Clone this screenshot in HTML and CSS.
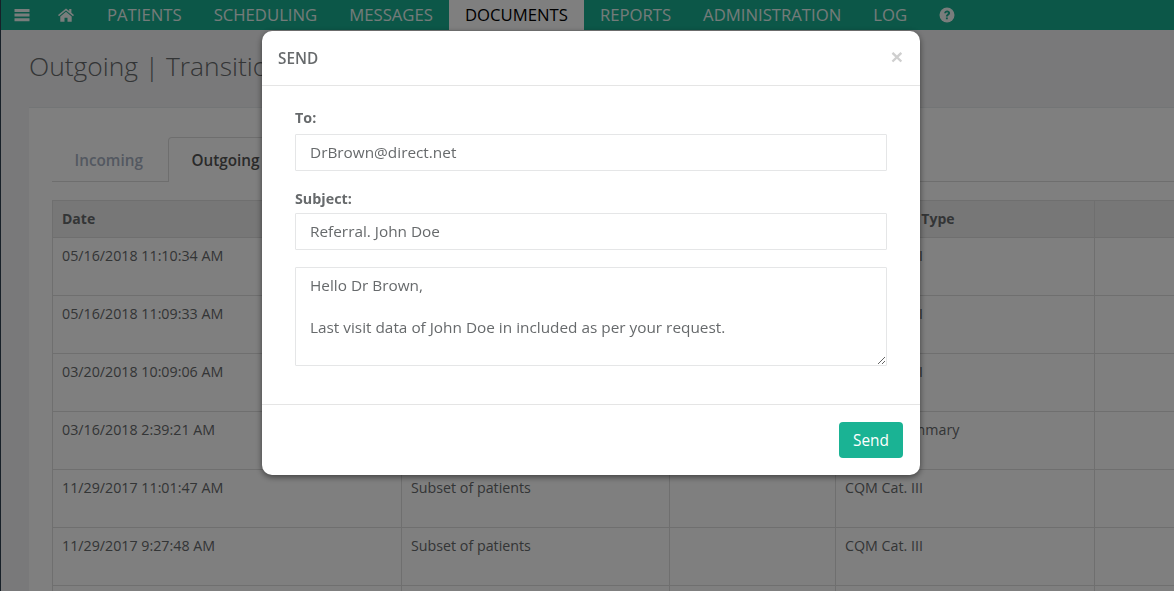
FILE: index.html
```html
<!DOCTYPE html>
<html lang="en">
<head>
<meta charset="utf-8">
<title>Outgoing | Transitions</title>
<link rel="stylesheet" href="styles.css">
</head>
<body>
<div class="page">
  <nav class="topnav">
    <span class="nav-icon nav-burger"><svg width="16" height="14" viewBox="0 0 16 14"><path d="M0.5 1h15v3h-15zM0.5 5.6h15v3h-15zM0.5 10.2h15v3h-15z" fill="currentColor"/></svg></span>
    <span class="nav-icon nav-home"><svg width="16" height="14" viewBox="0 0 16 14"><path d="M8 0.4 0 7l1 1.2L8 2.5l7 5.7L16 7l-2.6-2.2V1h-2.2v2zM2.3 8.4V13.8h4.2V9.8h3v4h4.2V8.4L8 3.8z" fill="currentColor"/></svg></span>
    <a class="nav-link">PATIENTS</a>
    <a class="nav-link">SCHEDULING</a>
    <a class="nav-link">MESSAGES</a>
    <a class="nav-link active">DOCUMENTS</a>
    <a class="nav-link">REPORTS</a>
    <a class="nav-link">ADMINISTRATION</a>
    <a class="nav-link">LOG</a>
    <span class="nav-icon nav-help"><svg width="16" height="16" viewBox="0 0 16 16"><circle cx="8" cy="8" r="7.5" fill="currentColor"/><path d="M5.2 6.2C5.4 4.6 6.6 3.6 8.2 3.6c1.6 0 2.9 1 2.9 2.4 0 1.3-.8 1.9-1.6 2.4-.5.3-.7.6-.7 1.1H6.9c0-1.1.4-1.8 1.2-2.3.6-.4.9-.6.9-1.1 0-.5-.4-.8-.9-.8-.6 0-1 .4-1.1 1zM6.9 10.4h1.9v1.9H6.9z" fill="#18ae90"/></svg></span>
  </nav>
  <main class="content">
    <h1 class="page-title">Outgoing | Transitions of Care</h1>
    <section class="card">
      <div class="tabs">
        <a class="tab">Incoming</a>
        <a class="tab tab-active">Outgoing</a>
      </div>
      <table class="grid">
        <colgroup><col class="c1"><col class="c2"><col class="c3"><col class="c4"><col class="c5"></colgroup>
        <thead><tr><th>Date</th><th>Recipients</th><th>Status</th><th>Document Type</th><th></th></tr></thead>
        <tbody>
          <tr><td>05/16/2018 11:10:34 AM</td><td>Subset of patients</td><td></td><td>CQM Cat. III</td><td></td></tr>
          <tr><td>05/16/2018 11:09:33 AM</td><td>Subset of patients</td><td></td><td>CQM Cat. III</td><td></td></tr>
          <tr><td>03/20/2018 10:09:06 AM</td><td>Subset of patients</td><td></td><td>CQM Cat. III</td><td></td></tr>
          <tr><td>03/16/2018 2:39:21 AM</td><td>John Doe</td><td></td><td>Clinical Summary</td><td></td></tr>
          <tr><td>11/29/2017 11:01:47 AM</td><td>Subset of patients</td><td></td><td>CQM Cat. III</td><td></td></tr>
          <tr><td>11/29/2017 9:27:48 AM</td><td>Subset of patients</td><td></td><td>CQM Cat. III</td><td></td></tr>
          <tr><td></td><td></td><td></td><td></td><td></td></tr>
        </tbody>
      </table>
    </section>
  </main>
</div>
<div class="backdrop"></div>
<div class="modal">
  <header class="modal-head">
    <h4 class="modal-title">SEND</h4>
    <span class="modal-close">×</span>
  </header>
  <div class="modal-body">
    <label class="field-label">To:</label>
    <input class="field" type="text" value="DrBrown@direct.net">
    <label class="field-label label-second">Subject:</label>
    <input class="field" type="text" value="Referral. John Doe">
    <textarea class="field field-area">Hello Dr Brown,

Last visit data of John Doe in included as per your request.</textarea>
  </div>
  <footer class="modal-foot">
    <button class="btn-send" type="button">Send</button>
  </footer>
</div>
</body>
</html>
```
FILE: styles.css
```css
* { box-sizing: border-box; }
html, body { margin: 0; height: 591px; overflow: hidden; }
body {
  font-family: "Open Sans", "Liberation Sans", sans-serif;
  font-size: 14.25px;
  color: #676a6c;
  background: #2f4050;
}
.page { margin-left: 1px; height: 591px; background: #f3f3f4; overflow: hidden; }
.topnav {
  display: flex;
  align-items: stretch;
  height: 30px;
  background: #18ae90;
  color: #fff;
  font-size: 16.7px;
  line-height: 30px;
}
.nav-icon { display: flex; align-items: center; color: #fff; opacity: .95; }
.nav-burger { margin-left: 13px; width: 44px; }
.nav-home { width: 33px; }
.nav-help { margin-left: 16px; }
.nav-link { padding: 0 16px; white-space: nowrap; color: #e8f7f4; }
.nav-link.active { background: #fff; color: #000; }
.content { padding: 0 0 0 28px; }
.page-title {
  margin: 0;
  padding-top: 19px;
  height: 77px;
  font-size: 26.4px;
  line-height: 34px;
  font-weight: 300;
  white-space: nowrap;
}
.card { background: #fff; border-top: 1px solid #e7eaec; padding: 29px 0 0 23px; height: 600px; width: 1200px; }
.tabs { display: flex; height: 45px; border-bottom: 1px solid #ddd; }
.tab {
  padding: 0 24.5px 0 21.5px;
  height: 44px;
  line-height: 44px;
  font-size: 15.3px;
  font-weight: 600;
  color: #a7b1c2;
  border: 1px solid transparent;
  border-bottom: 0;
}
.tab-active { color: #555; background: #fff; border-color: #ddd; height: 45px; border-radius: 4px 4px 0 0; padding: 0 22px; }
.grid {
  margin-top: 18px;
  border-collapse: collapse;
  table-layout: fixed;
  width: 1150px;
}
.c1 { width: 349px; }
.c2 { width: 268px; }
.c3 { width: 166px; }
.c4 { width: 259px; }
.grid th, .grid td {
  border: 1px solid #dedede;
  padding: 8px 9px;
  text-align: left;
  vertical-align: top;
  line-height: 20px;
}
.grid thead tr { height: 37px; background: #efefef; }
.grid tbody tr { height: 58px; }
.grid th { font-weight: 700; font-size: 14px; color: #676a6c; }
.backdrop { position: fixed; inset: 0; background: rgba(0,0,0,.5); }
.modal {
  position: fixed;
  left: 262px;
  top: 31px;
  width: 658px;
  height: 444px;
  background: #fff;
  border-radius: 10px;
  box-shadow: 0 2px 6px rgba(0,0,0,.5);
  display: flex;
  flex-direction: column;
}
.modal-head {
  display: flex;
  justify-content: space-between;
  height: 55px;
  padding: 18px 17px 0 16px;
  border-bottom: 1px solid #e5e5e5;
  flex: none;
}
.modal-title { margin: 0; font-size: 15.3px; line-height: 19px; font-weight: 600; color: #676a6c; }
.modal-close { font-size: 21px; line-height: 16px; font-weight: 700; color: #cfcfcf; font-family: "Liberation Sans", sans-serif; }
.modal-body { flex: 1; padding: 23px 33px 0; display: flex; flex-direction: column; }
.field-label { font-size: 14.3px; line-height: 18px; font-weight: 700; color: #676a6c; margin-bottom: 7px; }
.label-second { margin-top: 19px; margin-bottom: 5px; }
.field {
  display: block;
  width: 592px;
  height: 37px;
  padding: 5px 14px 7px;
  border: 1px solid #e5e6e7;
  border-radius: 1px;
  font-family: inherit;
  font-size: 15.35px;
  color: #676a6c;
  background: #fff;
  outline: 0;
  flex: none;
}
.field-area { height: 99px; margin-top: 17px; line-height: 21px; padding: 7px 14px; resize: vertical; }
.modal-foot { flex: none; height: 71px; border-top: 1px solid #e5e5e5; padding: 17px 17px 0 0; display: flex; justify-content: flex-end; align-items: flex-start; }
.btn-send {
  width: 64px;
  height: 36px;
  border: 0;
  border-radius: 4px;
  background: #1ab394;
  color: #fff;
  font-family: inherit;
  font-size: 15.4px;
  padding: 0;
}
```
